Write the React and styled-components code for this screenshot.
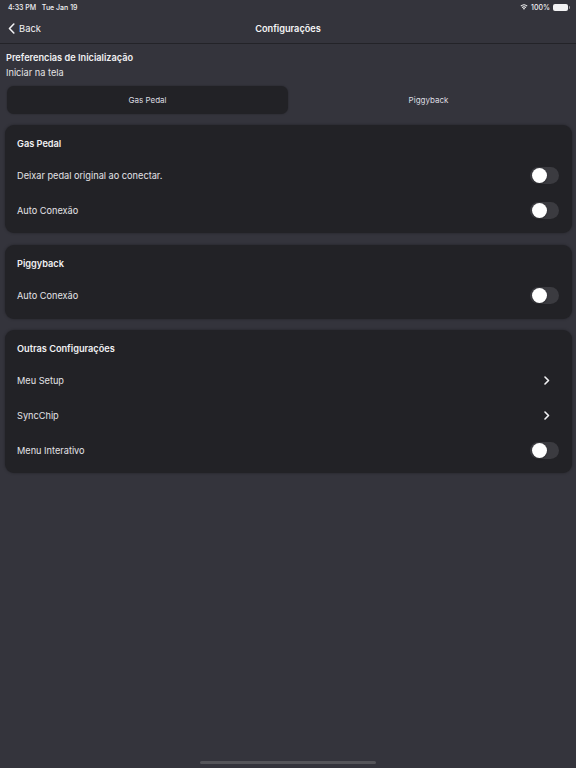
import styled, { createGlobalStyle } from 'styled-components';

const GlobalStyle = createGlobalStyle`
	html, body {
		margin: 0;
		padding: 0;
		background: #34343c;
	}
	body {
		font-family: Inter, "Noto Sans", sans-serif;
		color: #e8e8ea;
		-webkit-font-smoothing: antialiased;
	}
`;

const otherRows = [
	{ label: 'Meu Setup', kind: 'link' },
	{ label: 'SyncChip', kind: 'link' },
	{ label: 'Menu Interativo', kind: 'toggle' },
];

function Toggle() {
	return (
		<Track>
			<Knob />
		</Track>
	);
}

function Chevron() {
	return (
		<svg width="6" height="9" viewBox="0 0 6 9">
			<path d="M1 1l3.5 3.5L1 8" fill="none" stroke="#f2f2f4" strokeWidth="1.6" strokeLinecap="round" strokeLinejoin="round" />
		</svg>
	);
}

function App() {
	return (
		<Screen>
			<GlobalStyle />
			<StatusBar>
				<span>4:33 PM&nbsp;&nbsp;&nbsp;Tue Jan 19</span>
				<StatusRight>
					<svg width="8" height="6" viewBox="0 0 16 12">
						<path d="M8 11.5l2.2-2.6a3.4 3.4 0 0 0-4.4 0z" fill="#fff" />
						<path d="M3.6 6.6a6.6 6.6 0 0 1 8.8 0l-1.3 1.5a4.6 4.6 0 0 0-6.2 0z" fill="#fff" />
						<path d="M1 3.7a10.6 10.6 0 0 1 14 0l-1.3 1.5a8.6 8.6 0 0 0-11.4 0z" fill="#fff" />
					</svg>
					<span>100%</span>
					<Battery>
						<BatteryFill />
					</Battery>
				</StatusRight>
			</StatusBar>
			<NavBar>
				<BackButton>
					<svg width="7" height="11" viewBox="0 0 7 11">
						<path d="M5.8 1L1.5 5.5 5.8 10" fill="none" stroke="#f2f2f4" strokeWidth="1.6" strokeLinecap="round" strokeLinejoin="round" />
					</svg>
					<span>Back</span>
				</BackButton>
				<NavTitle>Configurações</NavTitle>
			</NavBar>

			<Content>
				<Preferences>
					<PrefTitle>Preferencias de Inicialização</PrefTitle>
					<PrefSub>Iniciar na tela</PrefSub>
					<Segmented>
						<Segment $active>Gas Pedal</Segment>
						<Segment>Piggyback</Segment>
					</Segmented>
				</Preferences>

				<Card>
					<CardTitle>Gas Pedal</CardTitle>
					<Row>
						<RowLabel>Deixar pedal original ao conectar.</RowLabel>
						<Toggle />
					</Row>
					<Row>
						<RowLabel>Auto Conexão</RowLabel>
						<Toggle />
					</Row>
				</Card>

				<Card>
					<CardTitle>Piggyback</CardTitle>
					<Row>
						<RowLabel>Auto Conexão</RowLabel>
						<Toggle />
					</Row>
				</Card>

				<Card>
					<CardTitle>Outras Configurações</CardTitle>
					{otherRows.map((row) => (
						<Row key={row.label}>
							<RowLabel>{row.label}</RowLabel>
							{row.kind === 'toggle' ? <Toggle /> : <ChevronBox><Chevron /></ChevronBox>}
						</Row>
					))}
				</Card>
			</Content>

			<HomeIndicator />
		</Screen>
	);
}

const Screen = styled.div`
	width: 576px;
	height: 768px;
	background: #34343c;
	position: relative;
	overflow: hidden;
`;

const StatusBar = styled.div`
	height: 14px;
	padding: 0 8px;
	display: flex;
	align-items: center;
	justify-content: space-between;
	font-size: 7px;
	font-weight: 500;
	color: #f2f2f4;
`;

const StatusRight = styled.div`
	display: flex;
	align-items: center;
	gap: 3px;
`;

const Battery = styled.div`
	width: 15px;
	height: 7px;
	border-radius: 2px;
	box-sizing: border-box;
	padding: 1px;
	display: flex;
	position: relative;
	background: #f2f2f4;

	&::after {
		content: '';
		position: absolute;
		right: -2px;
		top: 2px;
		width: 1px;
		height: 3px;
		background: #9a9aa0;
		border-radius: 0 1px 1px 0;
	}
`;

const BatteryFill = styled.div`
	flex: 1;
	background: #f2f2f4;
	border-radius: 1px;
`;

const NavBar = styled.div`
	height: 28px;
	position: relative;
	display: flex;
	align-items: center;
	justify-content: center;
	border-bottom: 1px solid #232328;
	padding-bottom: 1px;
`;

const BackButton = styled.div`
	position: absolute;
	left: 8px;
	top: 0;
	bottom: 0;
	display: flex;
	align-items: center;
	gap: 4px;
	font-size: 9.4px;
	color: #f2f2f4;
`;

const NavTitle = styled.div`
	font-size: 9.2px;
	font-weight: 600;
	color: #f4f4f6;
`;

const Content = styled.div`
	display: flex;
	flex-direction: column;
	gap: 11.5px;
	padding: 0 4px 0 5px;
`;

const Preferences = styled.div`
	padding: 7px 2px 0 1px;
	margin-bottom: -0.5px;
`;

const PrefTitle = styled.div`
	font-size: 9.2px;
	font-weight: 600;
	line-height: 14px;
	color: #f0f0f2;
`;

const PrefSub = styled.div`
	font-size: 9.2px;
	line-height: 14px;
	margin-top: 1px;
	color: #e4e4e6;
`;

const Segmented = styled.div`
	margin-top: 6px;
	display: grid;
	grid-template-columns: 1fr 1fr;
	height: 28px;
	padding: 0 1px;
`;

const Segment = styled.div`
	display: flex;
	align-items: center;
	justify-content: center;
	font-size: 8px;
	color: #dcdce0;
	border-radius: 7px;
	background: ${(p) => (p.$active ? '#222226' : 'transparent')};
	box-shadow: ${(p) => (p.$active ? '0 0 2px rgba(0,0,0,0.35)' : 'none')};
`;

const Card = styled.div`
	background: #222226;
	border-radius: 9px;
	padding: 12px 13px 5.5px 12px;
	box-shadow: 0 0 3px rgba(0, 0, 0, 0.35);
`;

const CardTitle = styled.div`
	font-size: 9.2px;
	font-weight: 600;
	line-height: 14px;
	color: #f0f0f2;
	margin-bottom: 7.5px;
`;

const Row = styled.div`
	height: 34.7px;
	display: flex;
	align-items: center;
	justify-content: space-between;
`;

const RowLabel = styled.div`
	font-size: 9.2px;
	color: #e2e2e6;
`;

const Track = styled.div`
	width: 29px;
	height: 17px;
	border-radius: 9px;
	background: #3b3b40;
	display: flex;
	align-items: center;
	padding: 0 1.5px;
	box-sizing: border-box;
`;

const Knob = styled.div`
	width: 15px;
	height: 15px;
	border-radius: 50%;
	background: #ffffff;
	box-shadow: 0 1px 2px rgba(0, 0, 0, 0.3);
`;

const ChevronBox = styled.div`
	width: 20px;
	display: flex;
	justify-content: center;
	margin-right: 2px;
`;

const HomeIndicator = styled.div`
	position: absolute;
	bottom: 4px;
	left: 200px;
	width: 176px;
	height: 3px;
	border-radius: 2px;
	background: #55555a;
`;

export default App;
